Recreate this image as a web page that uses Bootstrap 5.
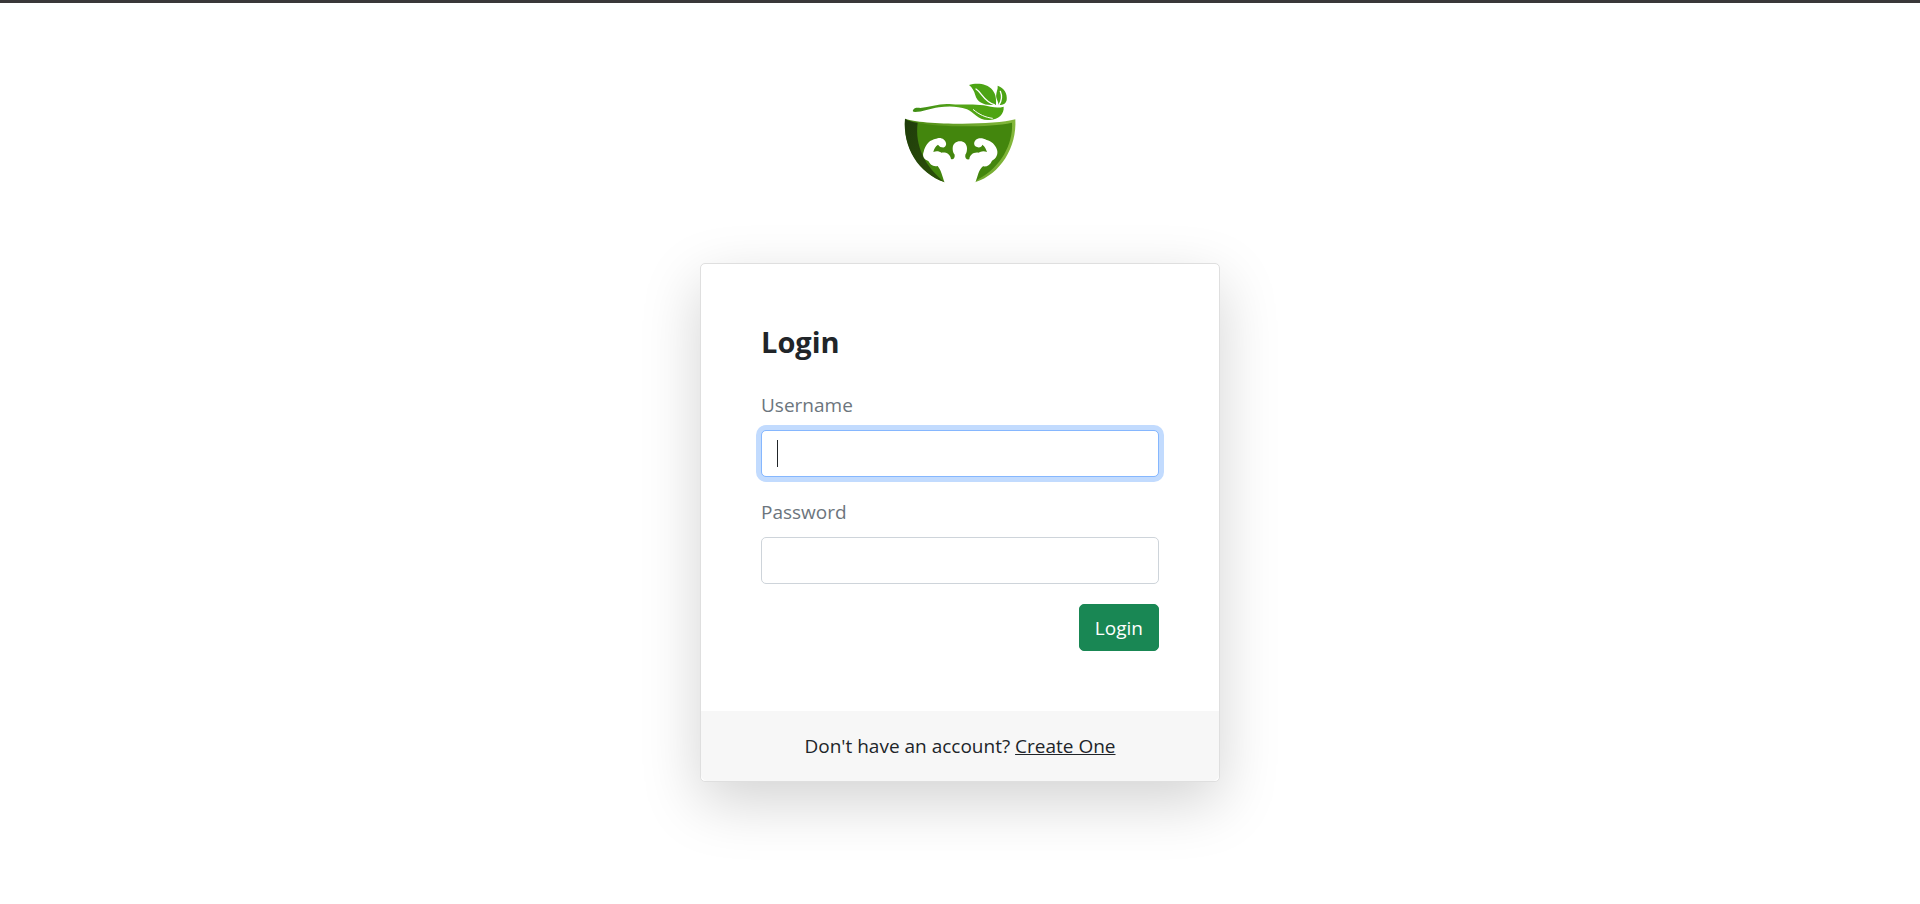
<!DOCTYPE html>
<html lang="en">
<head>
<meta charset="utf-8">
<meta name="viewport" content="width=device-width, initial-scale=1">
<title>Login</title>
<link href="https://cdn.jsdelivr.net/npm/bootstrap@5.3.0/dist/css/bootstrap.min.css" rel="stylesheet">
<style>
  :root { font-size: 20px; }
  body { font-family: "Segoe UI", "Open Sans", "Noto Sans", sans-serif; color: #212529; border-top: 3px solid #3a3839; }
  .page-wrap { max-width: 1650px; }
  .login-logo { width: 140px; height: 140px; }
  .login-card { border-radius: 5px; border-color: #dfdfdf; box-shadow: 0 20px 60px rgba(0, 0, 0, .175); }
  .login-title { font-size: 29px; line-height: 36px; }
  .login-text, .form-label, .login-btn { font-size: 19px; line-height: 30px; }
  .form-label { color: #6c757d; }
  .form-control { border-radius: 5px; border-color: #ced4da; transition: none; }
  .form-control:focus { border-color: #86b7fe; box-shadow: 0 0 0 5px #c2dbfe; }
  /* steady caret in the username box */
  #username { caret-color: transparent; }
  .text-caret { display: none; top: 10px; left: 16px; width: 1px; height: 27px; background: #212529; pointer-events: none; }
  #username:focus:placeholder-shown + .text-caret { display: block; }
  .login-btn { border-radius: 5px; }
  .login-footer { background: #f7f7f7; }
</style>
</head>
<body class="min-vh-100">
<main class="container-fluid page-wrap pb-5">
  <div class="row justify-content-center">
    <div class="col-12 col-md-8 col-lg-6 col-xl-4">
      <div class="text-center my-5">
        <svg class="login-logo d-block mx-auto" viewBox="0 -21 420 420" role="img" aria-label="Green bowl with athlete and leaves">
          <defs>
            <linearGradient id="rim" x1="0" x2="1"><stop offset="0" stop-color="#4b8a12"/><stop offset="1" stop-color="#84b83c"/></linearGradient>
            <linearGradient id="leaf" x1="0" x2="1"><stop offset="0" stop-color="#3f8d14"/><stop offset=".5" stop-color="#55a519"/><stop offset="1" stop-color="#4ca40f"/></linearGradient>
            <linearGradient id="shade" x1="0" x2="1" y2="1"><stop offset="0" stop-color="#1f3c0b"/><stop offset="1" stop-color="#2c5208"/></linearGradient>
          </defs>
          <!-- bowl -->
          <path fill="url(#rim)" d="M45 146C84 163 305 168 376 148C381 231 332 313 255 337L230 310H185L165 337C88 309 38 231 45 146Z"/>
          <path fill="#43860d" d="M80 158C145 171 290 174 366 158C370 223 331 292 267 326L253 337L230 310H185L165 337C112 301 72 237 80 158Z"/>
          <path fill="url(#shade)" d="M45 146C55 152 68 156 83 158C74 227 105 290 165 337C84 309 38 232 45 146Z"/>
          <!-- athlete -->
          <path fill="#fff" d="M164 338C156 317 155 304 143 288C128 291 121 283 115 273C101 268 96 257 101 245C103 236 107 229 111 223C119 211 132 208 143 205C155 202 166 210 168 219C170 228 163 234 155 232C149 231 147 227 144 224C137 228 132 237 130 246C140 242 148 244 154 248C168 246 180 251 183 267C190 270 195 264 194 254C188 248 188 240 188 234C189 221 198 214 210 214C222 214 230 222 231 234C231 242 230 249 226 254C224 264 230 270 238 268C239 255 250 246 265 248C273 243 282 242 291 246C288 237 285 229 277 224C275 231 268 234 261 231C251 229 250 217 257 210C264 203 279 204 290 210C304 213 316 224 321 239C325 251 319 266 306 272C301 284 291 291 279 289C265 301 264 317 256 338Z"/>
          <!-- spoon -->
          <path fill="url(#leaf)" d="M69 121C72 113 81 113 91 114C119 111 148 100 178 102C212 106 245 101 281 106C303 111 322 116 341 110C343 132 326 148 300 150C263 153 252 126 231 118C201 107 172 108 147 112C121 116 97 126 75 126C70 126 67 124 69 121Z"/>
          <path fill="none" stroke="#fff" stroke-width="3" stroke-linecap="round" d="M250 119C268 134 286 142 307 145"/>
          <!-- leaves -->
          <path fill="#4ca414" d="M237 45C258 39 291 39 308 61C318 74 319 89 318 104C287 109 262 99 256 76C252 62 247 53 237 45Z"/>
          <path fill="none" stroke="#fff" stroke-width="4" stroke-linecap="round" d="M258 57C275 67 280 93 313 104"/>
          <path fill="#4ca414" d="M323 47C342 53 353 71 350 91C347 102 338 107 326 104C324 91 316 84 319 72C320 62 324 58 323 47Z"/>
          <path fill="none" stroke="#fff" stroke-width="4" stroke-linecap="round" d="M331 64C337 78 334 94 327 105"/>
        </svg>
      </div>
      <div class="card login-card">
        <div class="card-body p-5">
          <h1 class="login-title fw-bold mb-4">Login</h1>
          <form>
            <div class="mb-3">
              <label class="form-label d-block mb-2" for="username">Username</label>
              <div class="position-relative">
                <input class="form-control" id="username" type="text" name="username" placeholder=" " autofocus>
                <span class="text-caret position-absolute"></span>
              </div>
            </div>
            <div class="mb-3">
              <label class="form-label d-block mb-2" for="password">Password</label>
              <input class="form-control" id="password" type="password" name="password">
            </div>
            <div class="d-flex">
              <button type="submit" class="btn btn-success login-btn ms-auto">Login</button>
            </div>
          </form>
        </div>
        <div class="card-footer login-footer login-text py-3 border-0 text-center">
          Don't have an account? <a href="#" class="text-dark">Create One</a>
        </div>
      </div>
    </div>
  </div>
</main>
<script src="https://cdn.jsdelivr.net/npm/bootstrap@5.3.0/dist/js/bootstrap.bundle.min.js"></script>
</body>
</html>
